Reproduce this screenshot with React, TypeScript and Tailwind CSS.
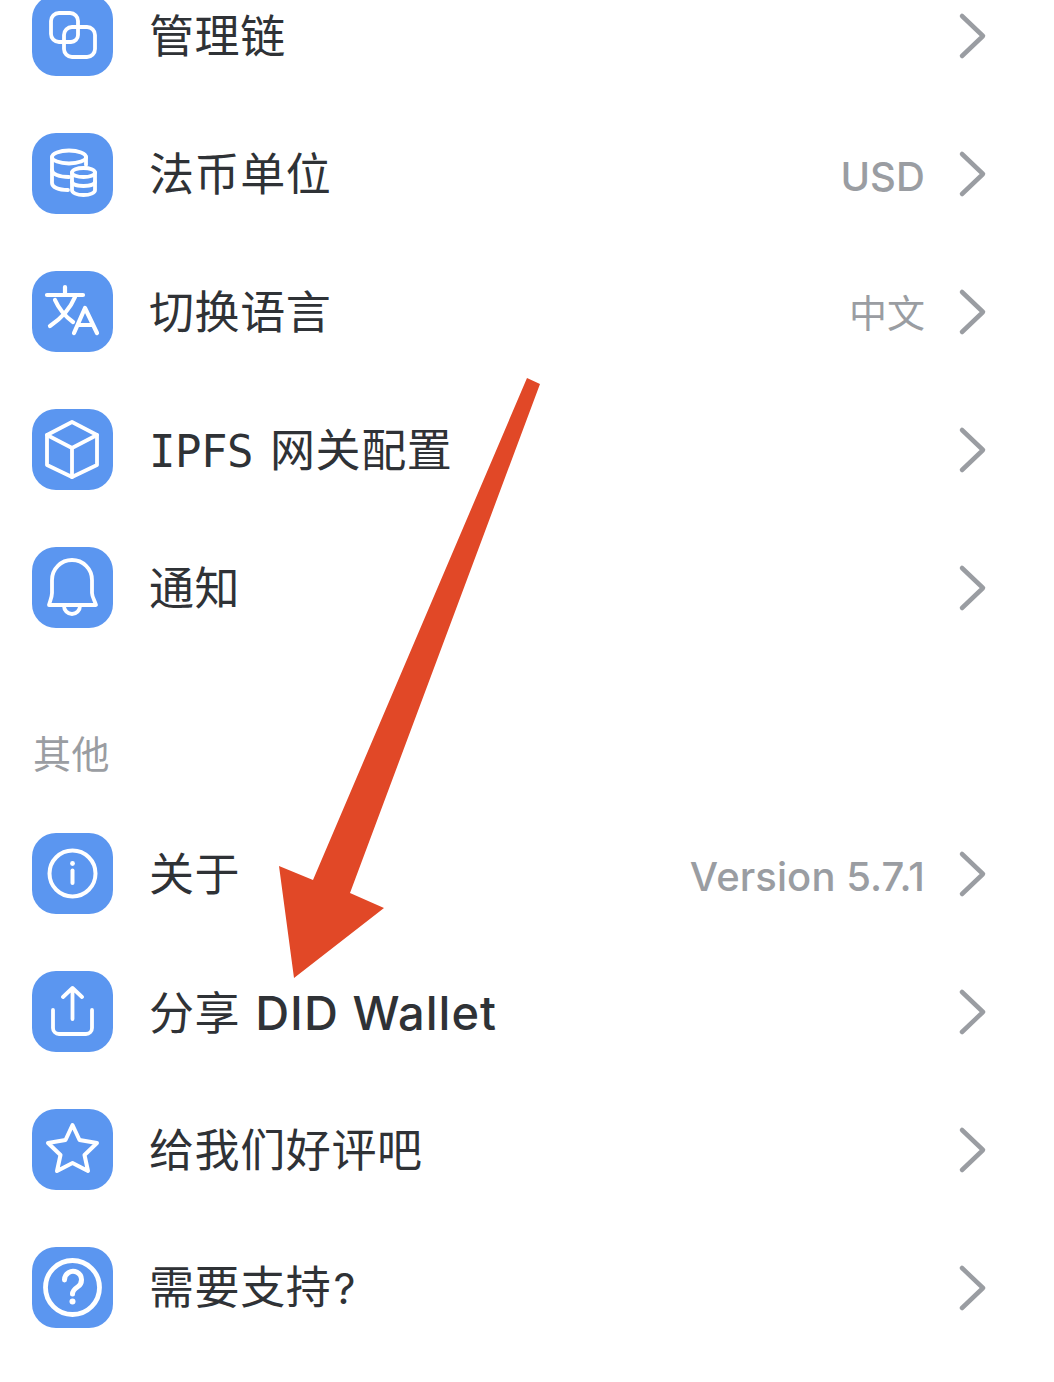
import React from "react";

const CJK = '"Noto Sans CJK SC", sans-serif';

function Glyph({ children }: { children: React.ReactNode }) {
  return (
    <svg width="81" height="81" viewBox="0 0 81 81" fill="none" stroke="#ffffff" strokeWidth="3.8" strokeLinecap="round" strokeLinejoin="round">
      {children}
    </svg>
  );
}

const icons: Record<string, React.ReactNode> = {
  link: (
    <Glyph>
      <path d="M30 47 h-3 a8 8 0 0 1-8-8 V26 a8 8 0 0 1 8-8 h11 a8 8 0 0 1 8 8 v6" />
      <path d="M46 32 v8 a7 7 0 0 1-7 7 h-7" />
      <rect x="32" y="32" width="31" height="30" rx="8" />
    </Glyph>
  ),
  db: (
    <Glyph>
      <ellipse cx="37" cy="24" rx="17" ry="6.5" />
      <path d="M20 24 V50 c0 4 6 7 16 7" />
      <path d="M20 37 c0 4 7 7 17 7" />
      <path d="M54 24 V32" />
      <ellipse cx="51.5" cy="39.5" rx="11.5" ry="4.5" />
      <path d="M40 39.5 V57 c0 3 5 5 11.5 5 s11.5-2 11.5-5 V39.5" />
      <path d="M40 48.5 c0 3 5 4.5 11.5 4.5 s11.5-1.500 11.500-4.500" />
    </Glyph>
  ),
  translate: (
    <Glyph>
      <path d="M33 16 V24 M15 24 H51" strokeWidth="4.200" />
      <path d="M43 26 C38 38 30 47 18 55" strokeWidth="4.200" />
      <path d="M23 29 C27 38 34 46 41 51" strokeWidth="4.200" />
      <path d="M42 62 L53 37 L65 62 M46 54 H61" strokeWidth="4.200" />
    </Glyph>
  ),
  cube: (
    <Glyph>
      <path d="M40 13 L65 26 V56 L40 68 L15 56 V26 Z" />
      <path d="M15 26 L40 39 L65 26 M40 39 V68" />
    </Glyph>
  ),
  bell: (
    <Glyph>
      <path d="M20 33 a20 20 0 0 1 40 0 V46 c0 4 3 8 4 12 H17 c1-4 3-8 3-12 Z" />
      <path d="M32 59 a8 8 0 0 0 16 0" />
    </Glyph>
  ),
  info: (
    <Glyph>
      <circle cx="40.500" cy="40.500" r="23" strokeWidth="4" />
      <path d="M40.500 37.500 V50" strokeWidth="4" />
      <circle cx="40.500" cy="30.500" r="2.400" fill="#ffffff" stroke="none" />
    </Glyph>
  ),
  share: (
    <Glyph>
      <path d="M40.500 17 V48 M31 26 L40.500 17 L50 26" />
      <path d="M21 39 V57 a6 6 0 0 0 6 6 H54 a6 6 0 0 0 6-6 V39" />
    </Glyph>
  ),
  star: (
    <Glyph>
      <path d="M40.500 16 L47.500 31 L65 34 L52.500 46 L56 62 L40.500 54 L25 62 L28.500 46 L16 34 L33.500 31 Z" strokeWidth="4" />
    </Glyph>
  ),
  help: (
    <Glyph>
      <circle cx="40.500" cy="40.500" r="27" strokeWidth="4.800" />
      <path d="M32.500 33 a8.500 8.500 0 1 1 13 7 c-3 2-5 3.500-5 7" strokeWidth="5" />
      <circle cx="40.500" cy="54.500" r="3" fill="#ffffff" stroke="none" />
    </Glyph>
  ),
};

function Row({ icon, label, value, latin }: { icon: string; label: React.ReactNode; value?: string; latin?: boolean }) {
  return (
    <div className="flex h-[138px] items-center pl-[32px] pr-[67px]">
      <div className="flex h-[81px] w-[81px] shrink-0 items-center justify-center rounded-[24px] bg-[#5b96f0]">{icons[icon]}</div>
      <div className="ml-[36px] min-w-0 flex-1 whitespace-nowrap pb-[2px] text-[45px] leading-[60px] tracking-[0.6px] text-[#2f3236]">{label}</div>
      {value && (
        <span
          className={
            latin
              ? "whitespace-nowrap pt-[8px] font-['Inter'] text-[40px] font-medium leading-[50px] tracking-[0.1px] text-[#9a9da2]"
              : "whitespace-nowrap text-[38px] leading-[50px] text-[#9a9da2]"
          }
        >
          {value}
        </span>
      )}
      <svg className="ml-[33px] mt-[2px] shrink-0" width="29" height="48" viewBox="0 0 29 48" fill="none" stroke="#9a9da2" strokeWidth="4.500" strokeLinecap="round" strokeLinejoin="round">
        <path d="M4 4 L25 24 L4 44" />
      </svg>
    </div>
  );
}

export default function App() {
  return (
    <div className="relative h-[1382px] w-[1054px] overflow-hidden bg-white" style={{ fontFamily: CJK }}>
      <div className="-mt-[34px]">
        <Row icon="link" label="管理链" />
        <Row icon="db" label="法币单位" value="USD" latin />
        <Row icon="translate" label="切换语言" value="中文" />
        <Row
          icon="cube"
          label={
            <span className="block pt-[4px]">
              <span className="font-['DejaVu_Sans_Mono'] text-[44px] font-medium tracking-[-0.5px]">IPFS</span>
              <span className="ml-[17px]">网关配置</span>
            </span>
          }
        />
        <Row icon="bell" label="通知" />
        <div className="flex h-[148px] items-end pb-[27px] pl-[33px] pt-[60px] text-[38px] leading-[50px] tracking-[0.4px] text-[#9a9da2]">其他</div>
        <Row icon="info" label="关于" value="Version 5.7.1" latin />
        <Row
          icon="share"
          label={
            <span className="block pt-[3px]">
              分享<span className="ml-[15px] font-['Inter'] text-[47px] font-medium tracking-[1px]">DID Wallet</span>
            </span>
          }
        />
        <Row icon="star" label="给我们好评吧" />
        <Row
          icon="help"
          label={
            <>
              需要支持<span className="ml-[2px] font-['Inter'] text-[43px]">?</span>
            </>
          }
        />
      </div>
      <svg className="absolute left-0 top-0" width="1054" height="1382" viewBox="0 0 1054 1382">
        <polygon points="527,378 540,384 350,893 384,908 294,978 279,866 313,880" fill="#e14827" />
      </svg>
    </div>
  );
}
